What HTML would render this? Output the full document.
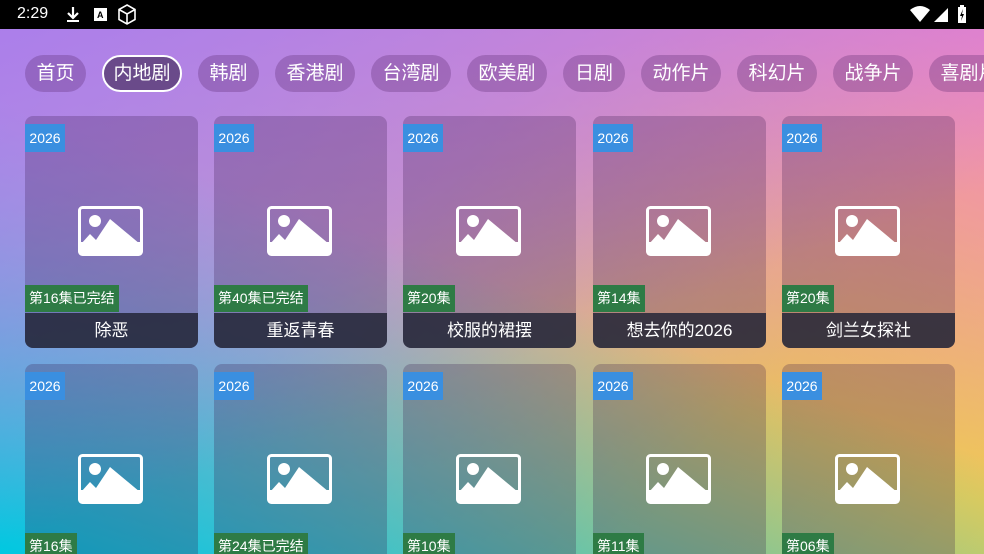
<!DOCTYPE html>
<html><head><meta charset="utf-8"><style>
*{margin:0;padding:0;box-sizing:border-box}
html,body{width:984px;height:554px;overflow:hidden}
body{position:relative;font-family:"Liberation Sans","Noto Sans CJK SC",sans-serif;color:#fff}
.bg{position:absolute;inset:0;background:
linear-gradient(160deg, rgba(170,125,235,1) 0%, rgba(170,125,235,0) 60%),
linear-gradient(20deg, rgba(0,200,225,1) 0%, rgba(0,200,225,0) 50%),
linear-gradient(200deg, rgba(245,128,200,1) 0%, rgba(245,128,200,0) 55%),
linear-gradient(135deg,#b4a0e0 0%,#c8a0c0 40%,#e8c060 75%,#f0cc50 100%);}
.sb{position:absolute;left:0;top:0;width:984px;height:29px;background:#000;font-size:16px}
.chip{position:absolute;top:55px;height:37px;border-radius:19px;background:rgba(90,40,110,.3);font-size:19px;line-height:37px;text-align:center}
.chip.on{background:#6a4a8a;border:2px solid #fff;line-height:33px}
.card{position:absolute;width:173px;height:232px;border-radius:8px;background:rgba(50,20,70,.25);overflow:hidden}
.yr{position:absolute;left:0;top:8px;width:40px;height:28px;background:#3a8fe0;font-size:14px;line-height:28px;text-align:center}
.ep{position:absolute;left:0;top:169px;height:27px;padding:0 4px;background:#2e7b45;font-size:14px;line-height:27px}
.tt{position:absolute;left:0;bottom:0;width:100%;height:35px;background:rgba(35,38,55,.85);font-size:17px;line-height:35px;text-align:center}
.ic{position:absolute;left:53px;top:90px}
</style></head><body>
<div class="bg"></div>
<div class="sb">
<span style="position:absolute;left:17px;top:5px;font-size:16px">2:29</span>
<svg style="position:absolute;left:66px;top:6px" width="14" height="17"><path d="M7 1v10M2 7l5 5 5-5" stroke="#fff" stroke-width="2.2" fill="none"/><rect x="1" y="14" width="12" height="2" fill="#fff"/></svg>
<svg style="position:absolute;left:94px;top:8px" width="13" height="13"><rect width="13" height="13" fill="#fff"/><text x="3" y="10" font-size="9" font-weight="bold" fill="#000">A</text></svg>
<svg style="position:absolute;left:117px;top:4px" width="20" height="21"><path d="M10 1l8 4.5v10L10 20 2 15.5v-10zM2 5.5L10 10l8-4.5M10 10v10" stroke="#fff" stroke-width="1.6" fill="none"/></svg>
<svg style="position:absolute;left:910px;top:6px" width="20" height="16"><path d="M0 4Q10-4 20 4L10 16z" fill="#fff"/></svg>
<svg style="position:absolute;left:934px;top:8px" width="14" height="14"><path d="M14 0v14H0z" fill="#fff"/></svg>
<svg style="position:absolute;left:957px;top:5px" width="10" height="18"><rect x="3" y="0" width="4" height="2" fill="#fff"/><rect x="1" y="2" width="8" height="16" fill="#fff"/><path d="M6 4L3 11h2l-1 5 3-7H5z" fill="#000"/></svg>
</div>
<div class="chip" style="left:25px;width:61px">首页</div>
<div class="chip on" style="left:102px;width:80px">内地剧</div>
<div class="chip" style="left:198px;width:61px">韩剧</div>
<div class="chip" style="left:275px;width:80px">香港剧</div>
<div class="chip" style="left:371px;width:80px">台湾剧</div>
<div class="chip" style="left:467px;width:80px">欧美剧</div>
<div class="chip" style="left:563px;width:62px">日剧</div>
<div class="chip" style="left:641px;width:80px">动作片</div>
<div class="chip" style="left:737px;width:80px">科幻片</div>
<div class="chip" style="left:833px;width:80px">战争片</div>
<div class="chip" style="left:929px;width:80px">喜剧片</div>

<svg width="0" height="0" style="position:absolute"><defs><g id="img"><rect x="1.5" y="1.5" width="62" height="47" rx="3" fill="none" stroke="#fff" stroke-width="3"/><rect x="1.5" y="36" width="62" height="12.5" fill="#fff"/><circle cx="17" cy="15" r="6" fill="#fff"/><path d="M3 38L12 28l6 6 14-21 30 25z" fill="#fff"/></g></defs></svg>

<div class="card" style="left:25px;top:116px"><svg class="ic" width="66" height="50"><use href="#img"/></svg><div class="yr">2026</div><div class="ep">第16集已完结</div><div class="tt">除恶</div></div>
<div class="card" style="left:214px;top:116px"><svg class="ic" width="66" height="50"><use href="#img"/></svg><div class="yr">2026</div><div class="ep">第40集已完结</div><div class="tt">重返青春</div></div>
<div class="card" style="left:403px;top:116px"><svg class="ic" width="66" height="50"><use href="#img"/></svg><div class="yr">2026</div><div class="ep">第20集</div><div class="tt">校服的裙摆</div></div>
<div class="card" style="left:593px;top:116px"><svg class="ic" width="66" height="50"><use href="#img"/></svg><div class="yr">2026</div><div class="ep">第14集</div><div class="tt">想去你的2026</div></div>
<div class="card" style="left:782px;top:116px"><svg class="ic" width="66" height="50"><use href="#img"/></svg><div class="yr">2026</div><div class="ep">第20集</div><div class="tt">剑兰女探社</div></div>

<div class="card" style="left:25px;top:364px"><svg class="ic" width="66" height="50"><use href="#img"/></svg><div class="yr">2026</div><div class="ep">第16集</div></div>
<div class="card" style="left:214px;top:364px"><svg class="ic" width="66" height="50"><use href="#img"/></svg><div class="yr">2026</div><div class="ep">第24集已完结</div></div>
<div class="card" style="left:403px;top:364px"><svg class="ic" width="66" height="50"><use href="#img"/></svg><div class="yr">2026</div><div class="ep">第10集</div></div>
<div class="card" style="left:593px;top:364px"><svg class="ic" width="66" height="50"><use href="#img"/></svg><div class="yr">2026</div><div class="ep">第11集</div></div>
<div class="card" style="left:782px;top:364px"><svg class="ic" width="66" height="50"><use href="#img"/></svg><div class="yr">2026</div><div class="ep">第06集</div></div>
</body></html>
